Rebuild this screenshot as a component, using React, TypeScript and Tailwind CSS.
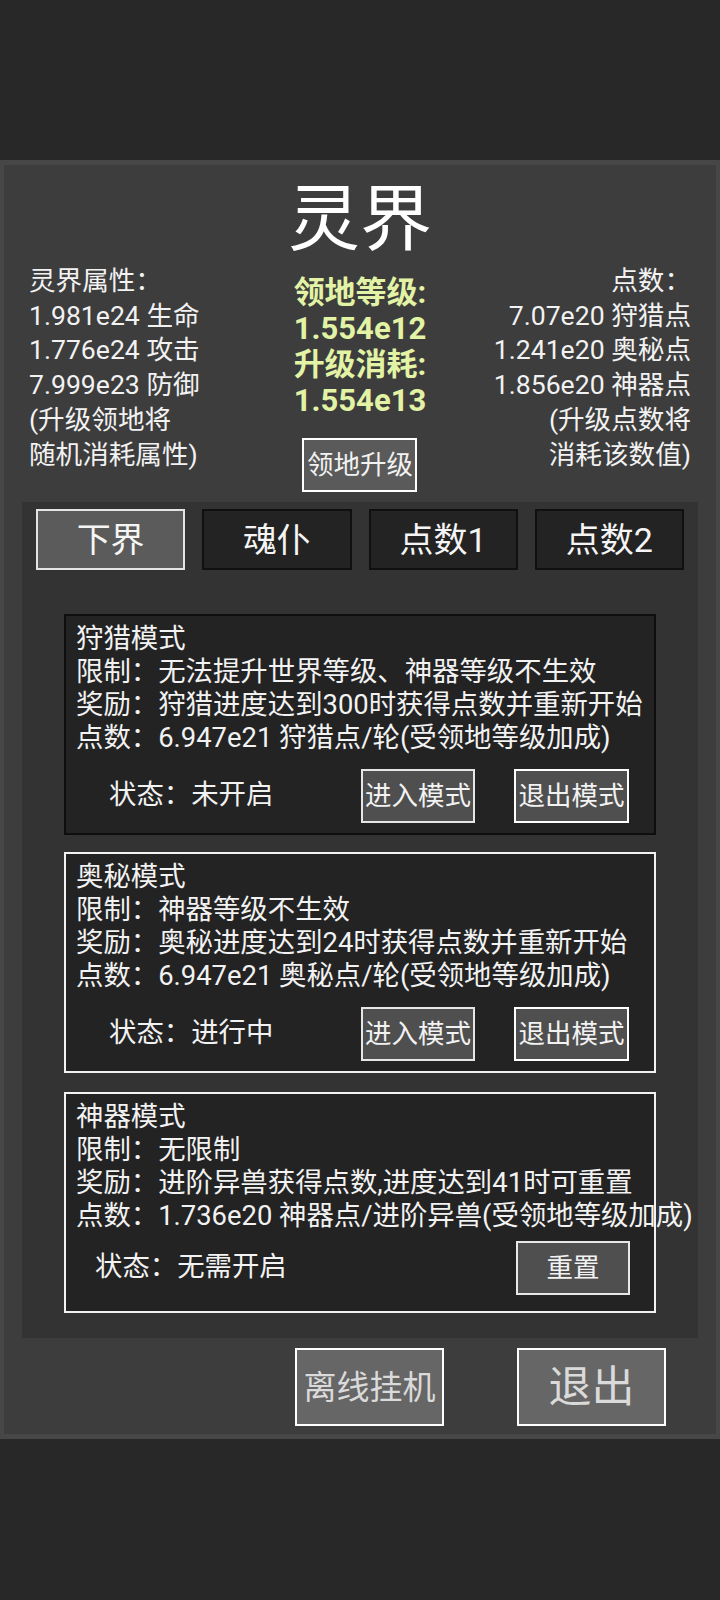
import React from "react";

const font = { fontFamily: 'Roboto, "Noto Sans CJK SC", sans-serif' };

const tabs = ["下界", "魂仆", "点数1", "点数2"];

type Mode = {
  title: string;
  limit: string;
  reward: string;
  points: string;
  status: string;
  border: string;
  kind: "toggle" | "reset";
};

const modes: Mode[] = [
  {
    title: "狩猎模式",
    limit: "限制：无法提升世界等级、神器等级不生效",
    reward: "奖励：狩猎进度达到300时获得点数并重新开始",
    points: "点数：6.947e21 狩猎点/轮(受领地等级加成)",
    status: "状态：未开启",
    border: "border-[#0e0e0e]",
    kind: "toggle",
  },
  {
    title: "奥秘模式",
    limit: "限制：神器等级不生效",
    reward: "奖励：奥秘进度达到24时获得点数并重新开始",
    points: "点数：6.947e21 奥秘点/轮(受领地等级加成)",
    status: "状态：进行中",
    border: "border-[#f2f2f2]",
    kind: "toggle",
  },
  {
    title: "神器模式",
    limit: "限制：无限制",
    reward: "奖励：进阶异兽获得点数,进度达到41时可重置",
    points: "点数：1.736e20 神器点/进阶异兽(受领地等级加成)",
    status: "状态：无需开启",
    border: "border-[#f2f2f2]",
    kind: "reset",
  },
];

const ModeCard = ({ mode }: { mode: Mode }) => {
  const isReset = mode.kind === "reset";
  return (
    <div className={`border-2 ${mode.border} bg-[#232323] px-[10px] pt-[7px] ${isReset ? "pb-[16px]" : "pb-[10px]"}`}>
      <div className="text-[27.4px] leading-[33px] text-[#f2f2f2] whitespace-nowrap">
        <div>{mode.title}</div>
        <div>{mode.limit}</div>
        <div>{mode.reward}</div>
        <div>{mode.points}</div>
      </div>
      {isReset ? (
        <div className="flex items-center mt-[8px] h-[54px]">
          <span className="ml-[19px] text-[27.4px] text-[#f2f2f2]">{mode.status}</span>
          <button className="ml-auto mr-[14px] w-[114px] h-[54px] border-2 border-[#e8e8e8] bg-[#4f4f4f] text-[26.5px] text-[#f2f2f2] leading-none">
            重置
          </button>
        </div>
      ) : (
        <div className="flex items-center mt-[14px] h-[54px]">
          <span className="ml-[33px] text-[27.4px] text-[#f2f2f2]">{mode.status}</span>
          <button className="ml-auto w-[114px] h-[54px] border-2 border-[#e6e6e6] bg-[#4f4f4f] text-[26.5px] text-[#f2f2f2] leading-none">
            进入模式
          </button>
          <button className="ml-[39px] mr-[15px] w-[115px] h-[54px] border-2 border-white bg-[#4f4f4f] text-[26.5px] text-[#f2f2f2] leading-none">
            退出模式
          </button>
        </div>
      )}
    </div>
  );
};

export default function App() {
  return (
    <div className="w-[720px] min-h-[1600px] bg-[#282828] pt-[160px]" style={font}>
      <div className="border-x-4 border-y-[5px] border-[#474747] bg-[#3d3d3d]">
        {/* Title */}
        <div className="pt-[15px] text-center text-[72px] leading-[80px] text-white">灵界</div>

        {/* Stats row */}
        <div className="grid grid-cols-3 px-[25px] mt-[4px] text-[26.6px] leading-[34.7px] text-[#f2f2f2]">
          <div className="text-left whitespace-nowrap">
            <div>灵界属性：</div>
            <div>1.981e24 生命</div>
            <div>1.776e24 攻击</div>
            <div>7.999e23 防御</div>
            <div>(升级领地将</div>
            <div>随机消耗属性)</div>
          </div>
          <div className="flex flex-col items-center pt-[11px]">
            <div className="text-[31px] leading-[36px] font-bold text-[#e3f3a5] text-center whitespace-nowrap">
              <div>领地等级:</div>
              <div>1.554e12</div>
              <div>升级消耗:</div>
              <div>1.554e13</div>
            </div>
            <button className="mt-[19px] w-[115px] h-[54px] border-2 border-white bg-[#5a5a5a] text-[26.5px] text-[#f2f2f2] leading-none">
              领地升级
            </button>
          </div>
          <div className="text-right whitespace-nowrap">
            <div>点数：</div>
            <div>7.07e20 狩猎点</div>
            <div>1.241e20 奥秘点</div>
            <div>1.856e20 神器点</div>
            <div>(升级点数将</div>
            <div>消耗该数值)</div>
          </div>
        </div>

        {/* Tab panel */}
        <div className="mx-[18px] mt-[10px] bg-[#333333] px-[14px] pt-[7px] pb-[25px]">
          <div className="grid grid-cols-4 gap-[17px]">
            {tabs.map((t, i) => (
              <button
                key={t}
                className={`h-[61px] border-2 text-[34px] text-[#f5f5f5] leading-none ${
                  i === 0 ? "bg-[#5b5b5b] border-[#e4e4e4]" : "bg-[#232323] border-[#101010]"
                }`}
              >
                {t}
              </button>
            ))}
          </div>
          <div className="mx-[28px] mt-[44px] flex flex-col">
            <ModeCard mode={modes[0]} />
            <div className="mt-[17px]">
              <ModeCard mode={modes[1]} />
            </div>
            <div className="mt-[19px]">
              <ModeCard mode={modes[2]} />
            </div>
          </div>
        </div>

        {/* Bottom buttons */}
        <div className="flex justify-end gap-[73px] pr-[50px] mt-[10px] pb-[8px]">
          <button className="w-[149px] h-[78px] border-2 border-white bg-[#666666] text-[33px] text-[#dadada] leading-none">
            离线挂机
          </button>
          <button className="w-[149px] h-[78px] border-2 border-white bg-[#666666] text-[43px] text-[#dadada] leading-none">
            退出
          </button>
        </div>
      </div>
    </div>
  );
}
